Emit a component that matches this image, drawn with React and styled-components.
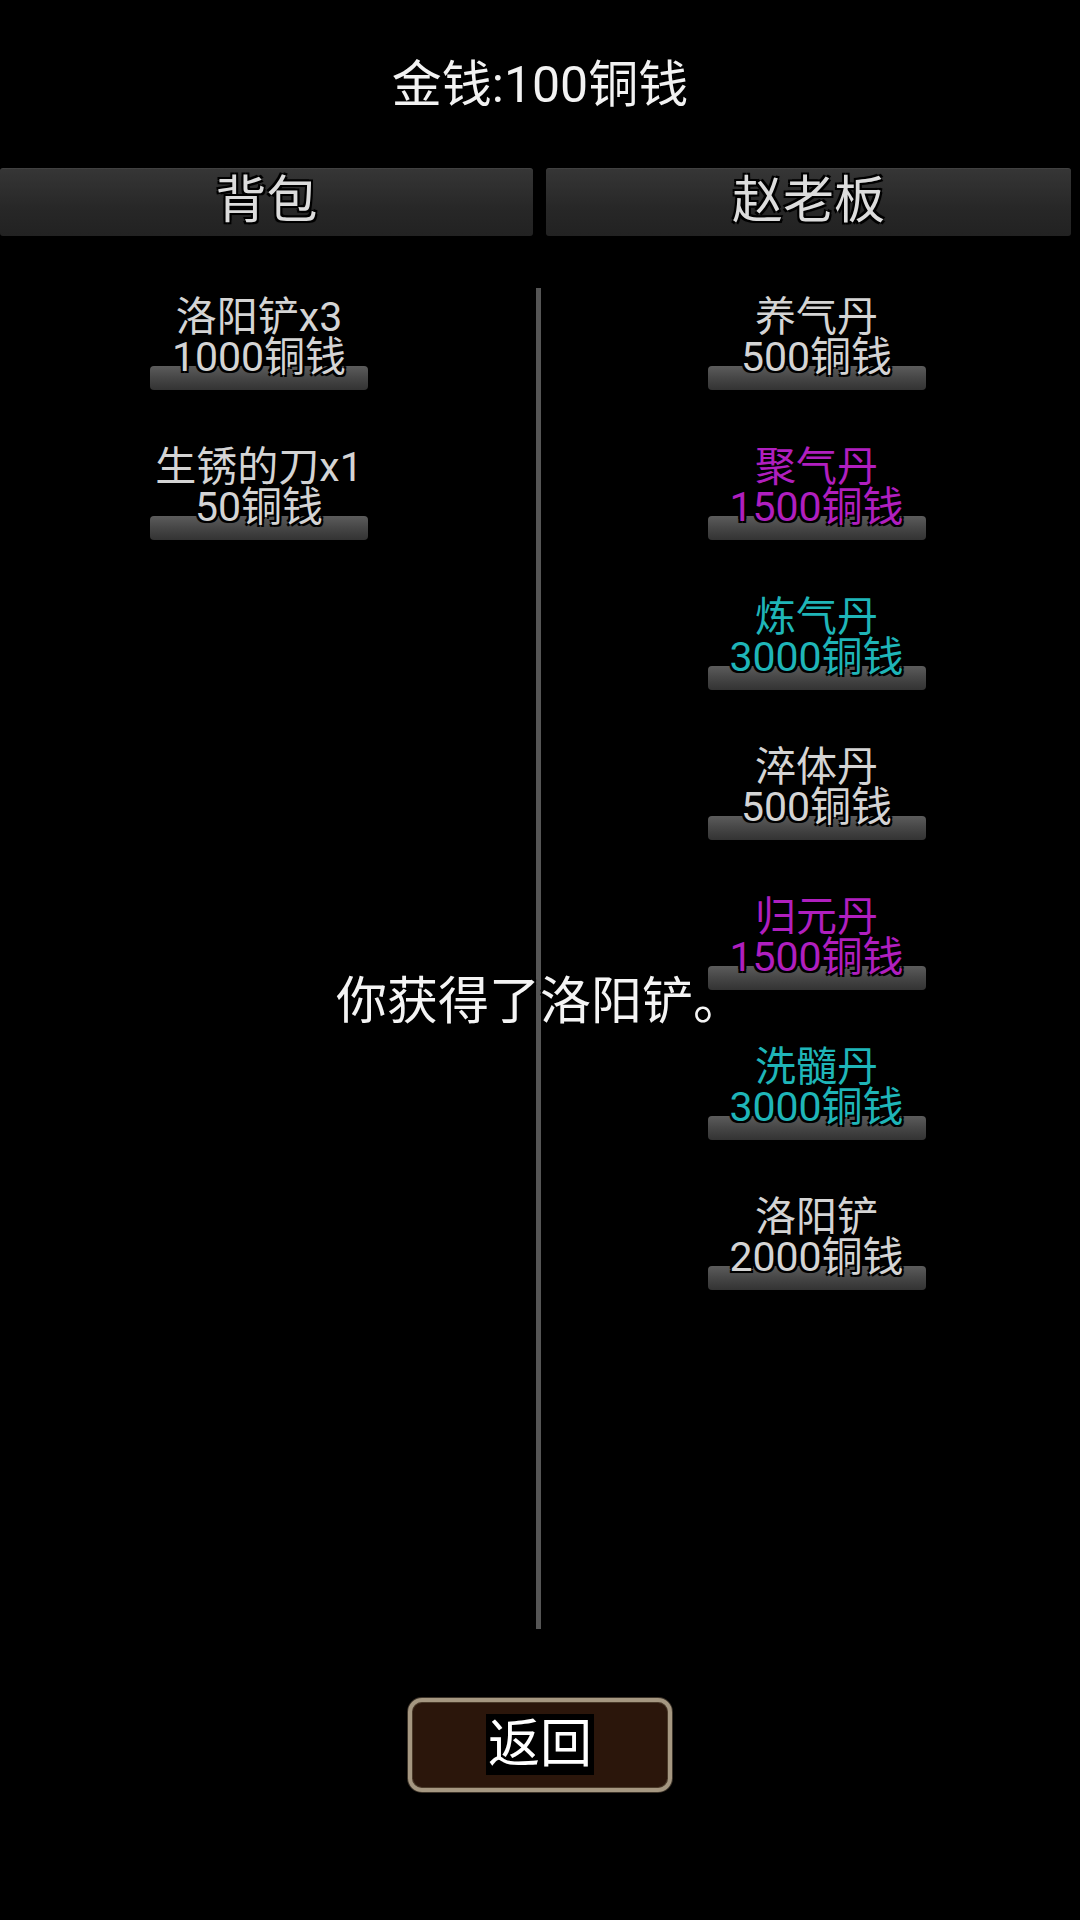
import React from 'react';
import styled, { createGlobalStyle } from 'styled-components';

const GlobalStyle = createGlobalStyle`
  html, body {
    margin: 0;
    padding: 0;
    background: #000;
  }
  body {
    font-family: Roboto, "Noto Sans CJK SC", sans-serif;
  }
`;

const outline = `
  text-shadow: 0 0 3px #000, 2px 2px 0 #000, -2px -2px 0 #000, 2px -2px 0 #000, -2px 2px 0 #000;
`;

const Screen = styled.div`
  position: relative;
  width: 1080px;
  height: 1920px;
  background: #000;
  overflow: hidden;
  display: flex;
  flex-direction: column;
`;

const Money = styled.div`
  margin: 0;
  padding-top: 55px;
  height: 60px;
  line-height: 60px;
  text-align: center;
  font-size: 50px;
  color: #f2f2f2;
  margin-bottom: 53px;
`;

const Tabs = styled.div`
  display: flex;
  gap: 13px;
  padding-right: 9px;
`;

const Tab = styled.div`
  width: ${p => p.$w}px;
  height: 68px;
  line-height: 66px;
  text-align: center;
  font-size: 51px;
  color: #dcdcdc;
  background: linear-gradient(#363636, #272727 60%, #222);
  border-radius: 3px;
  box-shadow: inset 0 1px 0 rgba(255, 255, 255, 0.06);
  ${outline}
`;

const Body = styled.div`
  display: flex;
  height: 1341px;
  margin-top: 52px;
`;

const List = styled.div`
  width: ${p => p.$w}px;
  padding-top: 9px;
  padding-left: ${p => p.$pl || 0}px;
  display: flex;
  flex-direction: column;
  align-items: center;
  gap: 57px;
`;

const Divider = styled.div`
  width: 5px;
  margin-left: ${p => p.$ml}px;
  background: #555;
`;

const Item = styled.div`
  display: flex;
  flex-direction: column;
  align-items: center;
  font-size: 41px;
  line-height: 40px;
  color: ${p => p.$color};
  ${outline}
`;

const Line = styled.div`
  position: relative;
  z-index: 1;
  white-space: nowrap;
`;

const Bar = styled.div`
  width: 218px;
  height: 24px;
  margin-top: -11px;
  border-radius: 4px;
  background: linear-gradient(#5c5c5c, #464646 50%, #333);
`;

const Toast = styled.div`
  position: absolute;
  left: 0;
  right: 0;
  top: 972px;
  line-height: 60px;
  text-align: center;
  font-size: 51px;
  color: #f4f4f4;
  ${outline}
`;

const BackButton = styled.button`
  align-self: center;
  margin-top: 69px;
  width: 264px;
  height: 94px;
  border: 4px solid #a59781;
  border-radius: 14px;
  background: #2b160b;
  box-shadow: 0 0 0 1px #3d342a, inset 0 0 0 1px #4a3a2a;
  font-family: inherit;
  font-size: 52px;
  line-height: 60px;
  color: #fff;
  padding: 0;
  cursor: pointer;
  span {
    background: #000;
    padding: 0 2px;
  }
`;

const colors = {
  normal: '#d4d4d4',
  purple: '#b01fbf',
  cyan: '#1fb5b8',
};

const bag = [
  { name: '洛阳铲x3', price: '1000铜钱', tone: 'normal' },
  { name: '生锈的刀x1', price: '50铜钱', tone: 'normal' },
];

const shop = [
  { name: '养气丹', price: '500铜钱', tone: 'normal' },
  { name: '聚气丹', price: '1500铜钱', tone: 'purple' },
  { name: '炼气丹', price: '3000铜钱', tone: 'cyan' },
  { name: '淬体丹', price: '500铜钱', tone: 'normal' },
  { name: '归元丹', price: '1500铜钱', tone: 'purple' },
  { name: '洗髓丹', price: '3000铜钱', tone: 'cyan' },
  { name: '洛阳铲', price: '2000铜钱', tone: 'normal' },
];

function Goods({ name, price, tone }) {
  return (
    <Item $color={colors[tone]}>
      <Line>{name}</Line>
      <Line>{price}</Line>
      <Bar />
    </Item>
  );
}

export default function App() {
  return (
    <Screen>
      <GlobalStyle />
      <Money>金钱:100铜钱</Money>
      <Tabs>
        <Tab $w={533}>背包</Tab>
        <Tab $w={525}>赵老板</Tab>
      </Tabs>
      <Body>
        <List $w={524}>
          {bag.map(g => <Goods key={g.name} {...g} />)}
        </List>
        <Divider $ml={18} />
        <List $w={533} $pl={12}>
          {shop.map(g => <Goods key={g.name} {...g} />)}
        </List>
      </Body>
      <Toast>你获得了洛阳铲。</Toast>
      <BackButton><span>返回</span></BackButton>
    </Screen>
  );
}
